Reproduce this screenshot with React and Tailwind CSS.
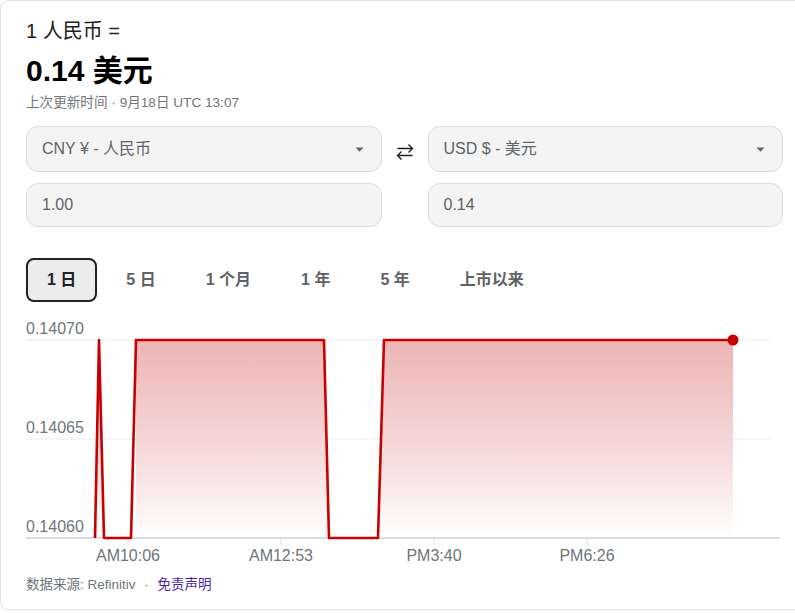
import React from 'react'

const font = { fontFamily: '"Liberation Sans", Arial, "Noto Sans CJK SC", sans-serif' }

const tabs = ['1 日', '5 日', '1 个月', '1 年', '5 年', '上市以来']

function Caret() {
  return (
    <svg width="9" height="5" viewBox="0 0 9 5" className="shrink-0">
      <path d="M0.5 0.5h8L4.5 4.8z" fill="#5f6368" />
    </svg>
  )
}

function SwapIcon() {
  return (
    <svg width="18" height="20" viewBox="0 0 18 20" fill="none" stroke="#202124" strokeWidth="1.4">
      <path d="M1.5 6.5h15M12.5 2.5l4 4-4 4" />
      <path d="M16.5 13.5h-15M5.5 9.5l-4 4 4 4" />
    </svg>
  )
}

function Chart() {
  const line = 'M69 223 L73 25 L78 223 L105 223 L110 25 L298 25 L303 223 L352 223 L358 25 L707 25'
  const area = 'M110 223 L110 25 L298 25 L303 223 Z M352 223 L358 25 L707 25 L707 223 Z M69 223 L73 25 L78 223 Z'
  const ticks = [
    { x: 102, label: 'AM10:06' },
    { x: 255, label: 'AM12:53' },
    { x: 408, label: 'PM3:40' },
    { x: 561, label: 'PM6:26' },
  ]
  return (
    <svg width="760" height="255" viewBox="0 0 760 255" className="block" style={font}>
      <defs>
        <linearGradient id="fill" x1="0" y1="0" x2="0" y2="1">
          <stop offset="0" stopColor="#e9a3a3" stopOpacity="0.8" />
          <stop offset="1" stopColor="#ffffff" stopOpacity="1" />
        </linearGradient>
      </defs>
      <line x1="0" y1="25" x2="745" y2="25" stroke="#ececec" strokeWidth="1" />
      <line x1="0" y1="124" x2="745" y2="124" stroke="#ececec" strokeWidth="1" />
      <path d={area} fill="url(#fill)" />
      <line x1="0" y1="223" x2="754" y2="223" stroke="#dadce0" strokeWidth="2" />
      {ticks.map((t) => (
        <g key={t.label}>
          <line x1={t.x} y1="223" x2={t.x} y2="230" stroke="#dadce0" strokeWidth="1" />
          <text x={t.x} y="246" textAnchor="middle" fontSize="16" fill="#70757a">{t.label}</text>
        </g>
      ))}
      <text x="0" y="19" fontSize="16" fill="#70757a">0.14070</text>
      <text x="0" y="118" fontSize="16" fill="#70757a">0.14065</text>
      <text x="0" y="217" fontSize="16" fill="#70757a">0.14060</text>
      <path d={line} fill="none" stroke="#c80000" strokeWidth="2.6" strokeLinejoin="round" />
      <circle cx="707" cy="25" r="5.5" fill="#c80000" />
    </svg>
  )
}

export default function App() {
  return (
    <div className="h-[613px] w-[795px] overflow-hidden bg-white" style={font}>
      <div className="h-[610px] w-[840px] rounded-l-lg border border-r-0 border-[#e3e3e3] pl-[25px] pt-[16px] text-[#202124]">
        <div className="text-xl">1 人民币 =</div>
        <div className="mt-[6px] text-[30px] font-bold leading-[40px] text-black">0.14 美元</div>
        <div className="mt-[2px] text-[13.6px] leading-[20px] text-[#70757a]">上次更新时间 · 9月18日 UTC 13:07</div>

        <div className="mt-[13px] grid w-[757px] grid-cols-[1fr_46px_1fr] gap-y-[11px]">
          <div className="flex h-[46px] items-center justify-between rounded-xl border border-[#dadce0] bg-[#f4f4f4] pl-[15px] pr-[17px] text-[16px] text-[#5f6368]">
            <span>CNY ¥ - 人民币</span>
            <Caret />
          </div>
          <div className="flex items-center justify-center pt-[6px]">
            <SwapIcon />
          </div>
          <div className="flex h-[46px] items-center justify-between rounded-xl border border-[#dadce0] bg-[#f4f4f4] pl-[15px] pr-[17px] text-[16px] text-[#5f6368]">
            <span>USD $ - 美元</span>
            <Caret />
          </div>
          <div className="flex h-[44px] items-center rounded-xl border border-[#dadce0] bg-[#f4f4f4] pl-[15px] text-[16px] text-[#5f6368]">
            1.00
          </div>
          <div />
          <div className="flex h-[44px] items-center rounded-xl border border-[#dadce0] bg-[#f4f4f4] pl-[15px] text-[16px] text-[#5f6368]">
            0.14
          </div>
        </div>

        <div className="mt-[31px] flex gap-[8px]">
          {tabs.map((t, i) => (
            <div
              key={t}
              className={
                i === 0
                  ? 'flex h-[44px] items-center rounded-lg border-2 border-[#202124] bg-[#ececec] px-[19px] text-[16px] font-bold text-[#202124]'
                  : 'flex h-[44px] items-center rounded-lg border-2 border-transparent px-[19px] text-[16px] font-bold text-[#5f6368]'
              }
            >
              {t}
            </div>
          ))}
        </div>

        <div className="mt-[13px]">
          <Chart />
        </div>

        <div className="mt-[6px] text-[13.5px] leading-[18px] text-[#70757a]">
          数据来源: Refinitiv <span className="mx-[5px]">·</span> <span className="text-[#4b1fae]">免责声明</span>
        </div>
      </div>
    </div>
  )
}
